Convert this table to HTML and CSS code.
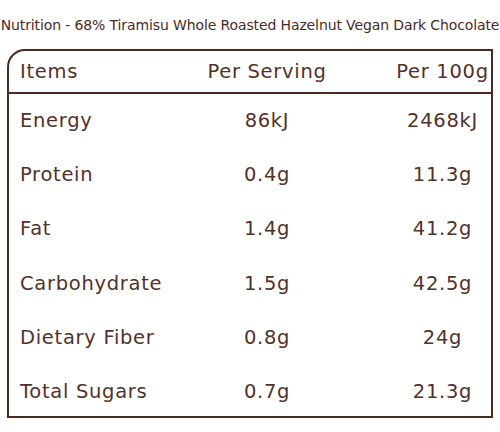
FILE: index.html
```html
<!DOCTYPE html>
<html lang="en">

<head>
    <meta charset="UTF-8">
    <meta name="viewport" content="width=device-width, initial-scale=1.0">
    <title>Nutrition</title>
    <link rel="stylesheet" href="styles.css">
</head>

<body>
    <h1 class="title">Nutrition - 68% Tiramisu Whole Roasted Hazelnut Vegan Dark Chocolate</h1>
    <div class="box">
        <div class="row head">
            <span>Items</span>
            <span>Per Serving</span>
            <span>Per 100g</span>
        </div>
        <div class="row">
            <span>Energy</span>
            <span>86kJ</span>
            <span>2468kJ</span>
        </div>
        <div class="row">
            <span>Protein</span>
            <span>0.4g</span>
            <span>11.3g</span>
        </div>
        <div class="row">
            <span>Fat</span>
            <span>1.4g</span>
            <span>41.2g</span>
        </div>
        <div class="row">
            <span>Carbohydrate</span>
            <span>1.5g</span>
            <span>42.5g</span>
        </div>
        <div class="row">
            <span>Dietary Fiber</span>
            <span>0.8g</span>
            <span>24g</span>
        </div>
        <div class="row">
            <span>Total Sugars</span>
            <span>0.7g</span>
            <span>21.3g</span>
        </div>
    </div>
</body>

</html>
```

FILE: styles.css
```css
body {
    margin: 0;
    color: #4b2a1f;
    font-family: "DejaVu Sans", sans-serif;
    background: #fff;
}

.title {
    margin: 0;
    height: 49px;
    line-height: 50px;
    font-size: 14px;
    font-weight: normal;
    text-align: center;
    white-space: nowrap;
    letter-spacing: -0.12px;
}

.box {
    margin: 0 7px;
    border: 2px solid #4b2a1f;
    border-top-left-radius: 18px;
}

.row {
    box-sizing: border-box;
    display: grid;
    grid-template-columns: 171px 174px 1fr;
    align-items: center;
    height: 54.4px;
    padding-bottom: 2.4px;
    font-size: 19.5px;
    letter-spacing: 0.7px;
    color: #52322a;
}

.row:last-child {
    height: 50px;
    padding: 2px 0 0;
}

.row span:nth-child(1) {
    padding-left: 11px;
}

.row span:nth-child(2) {
    text-align: center;
}

.row span:nth-child(3) {
    padding-left: 40px;
    text-align: center;
}

.head {
    height: 43px;
    padding: 0;
    border-bottom: 2px solid #4b2a1f;
}
```
